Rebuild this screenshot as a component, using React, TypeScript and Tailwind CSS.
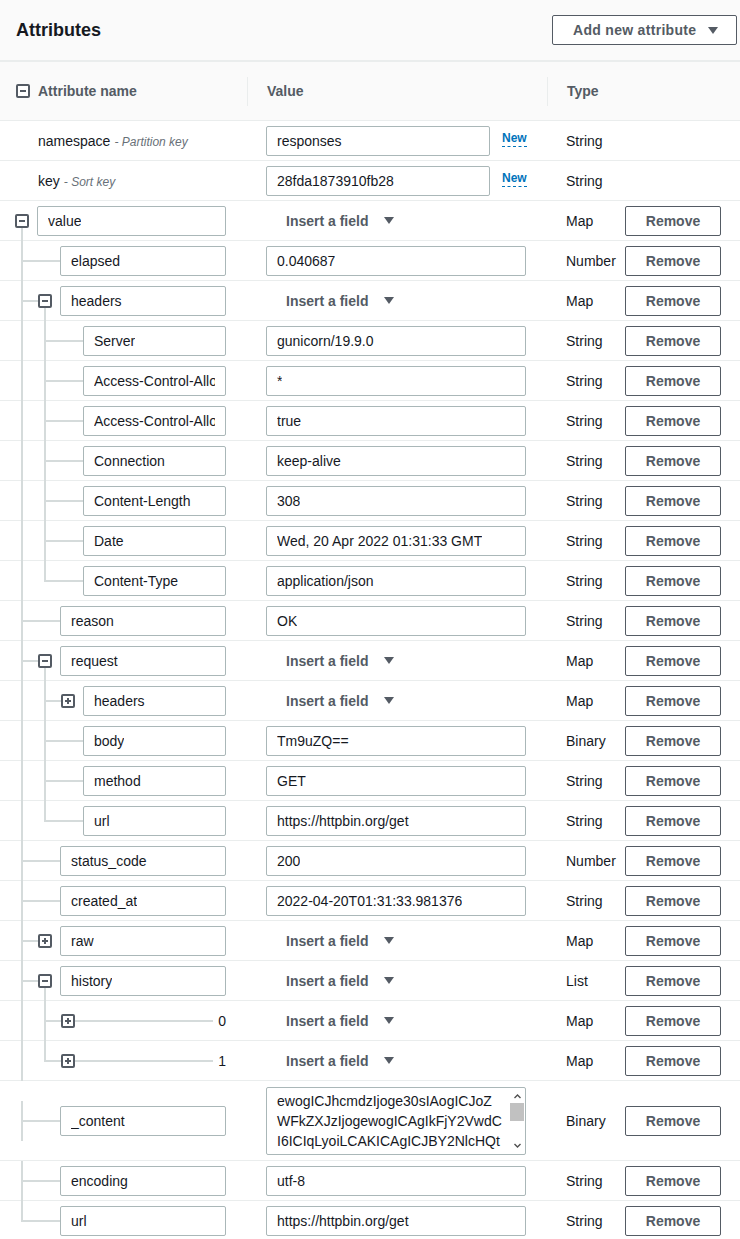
import React from "react";

type Node = {
  name: string;
  type: string;
  value?: string;
  open?: boolean;
  closed?: boolean;
  index?: boolean;
  lines?: string[];
  children?: Node[];
};

type Row = { node: Node; depth: number; cont: boolean[]; last: boolean };

const TREE: Node = {
  name: "value",
  type: "Map",
  open: true,
  children: [
    { name: "elapsed", type: "Number", value: "0.040687" },
    {
      name: "headers",
      type: "Map",
      open: true,
      children: [
        { name: "Server", type: "String", value: "gunicorn/19.9.0" },
        { name: "Access-Control-Allow-Origin", type: "String", value: "*" },
        { name: "Access-Control-Allow-Credentials", type: "String", value: "true" },
        { name: "Connection", type: "String", value: "keep-alive" },
        { name: "Content-Length", type: "String", value: "308" },
        { name: "Date", type: "String", value: "Wed, 20 Apr 2022 01:31:33 GMT" },
        { name: "Content-Type", type: "String", value: "application/json" },
      ],
    },
    { name: "reason", type: "String", value: "OK" },
    {
      name: "request",
      type: "Map",
      open: true,
      children: [
        { name: "headers", type: "Map", closed: true },
        { name: "body", type: "Binary", value: "Tm9uZQ==" },
        { name: "method", type: "String", value: "GET" },
        { name: "url", type: "String", value: "https://httpbin.org/get" },
      ],
    },
    { name: "status_code", type: "Number", value: "200" },
    { name: "created_at", type: "String", value: "2022-04-20T01:31:33.981376" },
    { name: "raw", type: "Map", closed: true },
    {
      name: "history",
      type: "List",
      open: true,
      children: [
        { name: "0", type: "Map", closed: true, index: true },
        { name: "1", type: "Map", closed: true, index: true },
      ],
    },
    {
      name: "_content",
      type: "Binary",
      lines: [
        "ewogICJhcmdzIjoge30sIAogICJoZ",
        "WFkZXJzIjogewogICAgIkFjY2VwdC",
        "I6ICIqLyoiLCAKICAgICJBY2NlcHQt",
      ],
    },
    { name: "encoding", type: "String", value: "utf-8" },
    { name: "url", type: "String", value: "https://httpbin.org/get" },
  ],
};

function flatten(nodes: Node[], depth: number, cont: boolean[], out: Row[]) {
  nodes.forEach((n, i) => {
    const last = i === nodes.length - 1;
    out.push({ node: n, depth, cont, last });
    if (n.open && n.children) {
      flatten(n.children, depth + 1, depth === 0 ? [] : [...cont, !last], out);
    }
  });
  return out;
}

const ROWS = flatten([TREE], 0, [], []);

// full class strings per depth
const PAD_EXPANDER = ["pl-[15px]", "pl-[38px]", "pl-[61px]"];
const PAD_INPUT = ["pl-[37px]", "pl-[60px]", "pl-[83px]"];

const LINE = "#d5dbdb";

function Caret() {
  return (
    <svg width="10" height="7" viewBox="0 0 10 7" className="shrink-0">
      <polygon points="0,0 10,0 5,7" fill="#545b64" />
    </svg>
  );
}

function Expander({ plus }: { plus?: boolean }) {
  return (
    <svg width="14" height="14" viewBox="0 0 14 14" className="relative shrink-0">
      <rect x="1" y="1" width="12" height="12" rx="1" fill="#fff" stroke="#545b64" strokeWidth="2" />
      <rect x="4" y="6" width="6" height="2" fill="#545b64" />
      {plus && <rect x="6" y="4" width="2" height="6" fill="#545b64" />}
    </svg>
  );
}

function TreeLines({ row }: { row: Row }) {
  const { depth: d, cont, last, node } = row;
  const hasExp = node.open || node.closed;
  const parts: React.ReactNode[] = [];
  for (let l = 0; l < d - 1; l++) {
    if (cont[l]) parts.push(<rect key={`v${l}`} x={21 + 23 * l} y={0} width={2} height={40} />);
  }
  if (d >= 1) {
    const x = 21 + 23 * (d - 1);
    const target = hasExp ? 15 + 23 * d : 37 + 23 * d;
    parts.push(<rect key="own" x={x} y={0} width={2} height={last ? 21 : 40} />);
    parts.push(<rect key="h" x={x} y={19} width={target - x} height={2} />);
  }
  if (node.index) parts.push(<rect key="idx" x={75} y={19} width={138} height={2} />);
  if (node.open) parts.push(<rect key="down" x={21 + 23 * d} y={27} width={2} height={13} />);
  return (
    <svg
      width="247"
      height="40"
      className="absolute left-0 top-1/2 -translate-y-1/2"
      fill={LINE}
    >
      {parts}
    </svg>
  );
}

function Field({ children, className = "" }: { children: React.ReactNode; className?: string }) {
  return (
    <div
      className={`relative flex h-[30px] min-w-0 items-center rounded-[2px] border border-[#aab7b8] bg-white px-[10px] ${className}`}
    >
      <div className="min-w-0 overflow-hidden whitespace-nowrap">{children}</div>
    </div>
  );
}

function InsertField() {
  return (
    <div className="flex items-center gap-4 pl-5 font-bold text-[#545b64]">
      <span>Insert a field</span>
      <Caret />
    </div>
  );
}

function RemoveButton() {
  return (
    <button
      type="button"
      className="h-[30px] w-[96px] shrink-0 rounded-[2px] border border-[#545b64] bg-white font-bold text-[#545b64]"
    >
      Remove
    </button>
  );
}

function ContentBox({ lines }: { lines: string[] }) {
  return (
    <div className="flex h-[68px] w-[260px] overflow-hidden rounded-[2px] border border-[#aab7b8] bg-white">
      <div className="flex-1 pl-[10px] pt-[3px] leading-5">
        {lines.map((l) => (
          <div key={l} className="whitespace-nowrap">
            {l}
          </div>
        ))}
      </div>
      <div className="flex w-[16px] flex-col items-center">
        <svg width="9" height="14" viewBox="0 0 9 14" className="mt-[1px]">
          <polyline points="1.5,9 4.5,6 7.5,9" fill="none" stroke="#505050" strokeWidth="1.4" />
        </svg>
        <div className="h-[18px] w-[14px] bg-[#c1c1c1]" />
        <div className="flex-1" />
        <svg width="9" height="14" viewBox="0 0 9 14" className="mb-[1px]">
          <polyline points="1.5,5 4.5,8 7.5,5" fill="none" stroke="#505050" strokeWidth="1.4" />
        </svg>
      </div>
    </div>
  );
}

function TreeRow({ row }: { row: Row }) {
  const { node, depth } = row;
  const hasExp = node.open || node.closed;
  const tall = !!node.lines;
  return (
    <div className={`flex items-center border-b border-[#eaeded] ${tall ? "h-20" : "h-10"}`}>
      <div
        className={`relative flex h-full w-[247px] shrink-0 items-center pr-[21px] ${
          hasExp ? PAD_EXPANDER[depth] : PAD_INPUT[depth]
        }`}
      >
        <TreeLines row={row} />
        {hasExp && <Expander plus={node.closed} />}
        {node.index ? (
          <span className="relative ml-auto">{node.name}</span>
        ) : (
          <Field className={`flex-1 ${hasExp ? "ml-2" : ""}`}>{node.name}</Field>
        )}
      </div>
      <div className="flex w-[300px] shrink-0 items-center pl-[19px]">
        {node.lines ? (
          <ContentBox lines={node.lines} />
        ) : node.value !== undefined ? (
          <Field className="w-[260px]">{node.value}</Field>
        ) : (
          <InsertField />
        )}
      </div>
      <div className="w-[78px] shrink-0 pl-[19px]">{node.type}</div>
      <RemoveButton />
    </div>
  );
}

function KeyRow({ name, hint, value }: { name: string; hint: string; value: string }) {
  return (
    <div className="flex h-10 items-center border-b border-[#eaeded]">
      <div className="flex w-[247px] shrink-0 items-baseline pl-[38px]">
        <span>{name}</span>
        <span className="ml-1 text-xs italic text-[#687078]">- {hint}</span>
      </div>
      <div className="flex w-[300px] shrink-0 items-center pl-[19px]">
        <Field className="w-[224px]">{value}</Field>
        <span className="ml-3 -mt-1 border-b border-dashed border-[#0073bb] text-xs font-bold leading-[15px] text-[#0073bb]">
          New
        </span>
      </div>
      <div className="pl-[19px]">String</div>
    </div>
  );
}

export default function App() {
  return (
    <div
      className="w-[740px] bg-white text-sm text-[#16191f]"
      style={{ fontFamily: '"Liberation Sans", Arial, sans-serif' }}
    >
      <div className="flex h-[60px] items-center justify-between bg-[#fafafa] pl-4 pr-[3px]">
        <h2 className="text-lg font-bold">Attributes</h2>
        <button
          type="button"
          className="flex h-[30px] w-[185px] items-center gap-3 rounded-[2px] border border-[#545b64] bg-white pl-5 font-bold tracking-[0.3px] text-[#545b64]"
        >
          Add new attribute
          <Caret />
        </button>
      </div>

      <div className="flex h-[61px] items-center border-t-2 border-b border-[#eaeded] bg-[#fafafa] font-bold text-[#545b64]">
        <div className="flex w-[247px] shrink-0 items-center gap-2 pl-4">
          <Expander />
          <span>Attribute name</span>
        </div>
        <div className="flex h-[29px] w-[300px] shrink-0 items-center border-l border-[#eaeded] pl-[19px]">
          Value
        </div>
        <div className="flex h-[29px] items-center border-l border-[#eaeded] pl-[19px]">Type</div>
      </div>

      <KeyRow name="namespace" hint="Partition key" value="responses" />
      <KeyRow name="key" hint="Sort key" value="28fda1873910fb28" />

      {ROWS.map((r, i) => (
        <TreeRow key={i} row={r} />
      ))}
    </div>
  );
}
